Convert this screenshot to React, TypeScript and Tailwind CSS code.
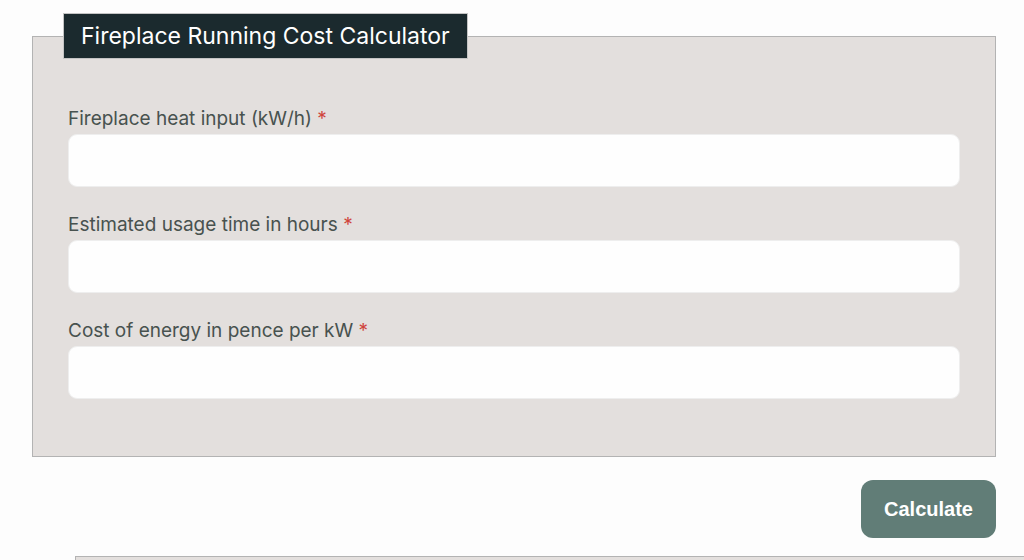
import React from "react";

const fields = [
  "Fireplace heat input (kW/h)",
  "Estimated usage time in hours",
  "Cost of energy in pence per kW",
];

export default function App() {
  return (
    <div
      className="w-[1024px] h-[560px] overflow-hidden bg-[#fdfdfd]"
      style={{ fontFamily: "Inter, 'Noto Sans', sans-serif" }}
    >
      <div className="pt-[13px] pl-[32px] pr-[28px]">
        <fieldset className="border border-[#b3b3b3] bg-[#e3dfdd] px-[35px] pb-[57px]">
          <legend className="ml-[-5px] h-[46px] px-[17px] bg-[#1b2a2e] border border-[#c4c4c4] text-white text-[23px] leading-[44px]">
            Fireplace Running Cost Calculator
          </legend>
          <div className="pt-[46px] flex flex-col gap-[24px]">
            {fields.map((f) => (
              <div key={f} className="flex flex-col gap-[3px]">
                <label className="text-[19px] leading-[26px] text-[#48524f] pt-[1px] h-[26px]">
                  {f} <span className="text-[#d0443c]">*</span>
                </label>
                <input
                  type="text"
                  className="h-[53px] w-full rounded-[9px] bg-[#fefefe] border border-[#eeeeee] outline-none"
                />
              </div>
            ))}
          </div>
        </fieldset>
        <div className="flex justify-end mt-[23px]">
          <button
            className="w-[135px] h-[58px] rounded-[12px] bg-[#617d77] text-white text-[20px] font-bold"
            style={{ fontFamily: "'Liberation Sans', Arial, sans-serif" }}
          >
            Calculate
          </button>
        </div>
      </div>
      <div className="mt-[18px] ml-[75px] border-t border-l border-[#b3b3b3] bg-[#e3dfdd] h-[60px] pl-[40px] pt-[3px]">
        <span className="text-[19px] leading-[26px] text-[#48524f]">
          Cost of energy in pence per kW/h <span className="text-[#d0443c]">*</span>
        </span>
      </div>
    </div>
  );
}
